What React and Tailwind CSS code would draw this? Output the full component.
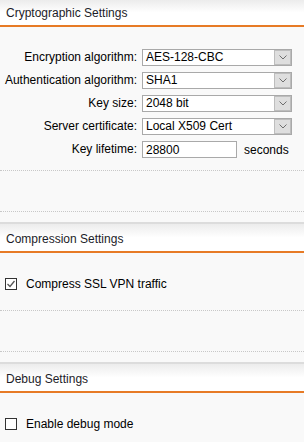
import React from 'react';

const ORANGE = 'border-[#e77b26]';

function Header({ title, first }) {
  return (
    <div
      className={`flex h-[27px] items-center border-b-2 ${ORANGE} bg-gradient-to-b from-[#ececec] via-white to-white px-[6px] text-[12px] text-[#1c1c28] ${first ? '' : 'mt-[10px] h-[31px] border-t-2 border-t-[#dcdcdc] pt-[2px]'}`}
    >
      {title}
    </div>
  );
}

function Select({ value }) {
  return (
    <div className="flex h-[17px] w-[150px] items-stretch border border-[#a9a9a9] bg-white">
      <span className="flex-1 pl-[3px] text-[12px] leading-[15px] text-black">{value}</span>
      <span className="flex w-[17px] items-center justify-center border border-[#bdbdbd] bg-[#dedede]">
        <svg width="8" height="5" viewBox="0 0 8 5">
          <path d="M0.5 0.5 L4 4 L7.5 0.5" fill="none" stroke="#6e6e6e" strokeWidth="1" />
        </svg>
      </span>
    </div>
  );
}

function Row({ label, children }) {
  return (
    <div className="flex h-[17px] items-center">
      <label className="w-[138px] pr-[1px] text-right text-[12px] leading-[17px] text-black">{label}</label>
      <div className="ml-[4px] flex items-center">{children}</div>
    </div>
  );
}

function Checkbox({ checked }) {
  return (
    <span className="flex h-[12px] w-[12px] items-center justify-center border border-[#333] bg-white">
      {checked && (
        <svg width="10" height="10" viewBox="0 0 10 10">
          <path d="M1.5 5 L4 7.5 L8.5 2" fill="none" stroke="#555" strokeWidth="1.3" />
        </svg>
      )}
    </span>
  );
}

function Footer() {
  return <div className="h-[42px] border-y border-dotted border-[#c8c8c8]" />;
}

export default function App() {
  return (
    <div className="h-[442px] w-[304px] overflow-hidden bg-[#f9f9f9]" style={{ fontFamily: '"Liberation Sans", Arial, sans-serif' }}>
      <Header title="Cryptographic Settings" first />
      <div className="flex flex-col gap-[6px] pt-[22px]">
        <Row label="Encryption algorithm:"><Select value="AES-128-CBC" /></Row>
        <Row label="Authentication algorithm:"><Select value="SHA1" /></Row>
        <Row label="Key size:"><Select value="2048 bit" /></Row>
        <Row label="Server certificate:"><Select value="Local X509 Cert" /></Row>
        <Row label="Key lifetime:">
          <input
            readOnly
            value="28800"
            className="h-[17px] w-[95px] border border-[#a9a9a9] bg-white pl-[3px] text-[12px] leading-[15px] text-black outline-none"
          />
          <span className="ml-[7px] text-[12px] text-black">seconds</span>
        </Row>
      </div>
      <div className="mt-[12px]"><Footer /></div>

      <Header title="Compression Settings" />
      <div className="flex h-[17px] items-center gap-[9px] pl-[5px] mt-[22px] text-[12px] text-black">
        <Checkbox checked />
        <span>Compress SSL VPN traffic</span>
      </div>
      <div className="mt-[18px]"><Footer /></div>

      <Header title="Debug Settings" />
      <div className="flex h-[17px] items-center gap-[9px] pl-[5px] mt-[22px] text-[12px] text-black">
        <Checkbox />
        <span>Enable debug mode</span>
      </div>
    </div>
  );
}
